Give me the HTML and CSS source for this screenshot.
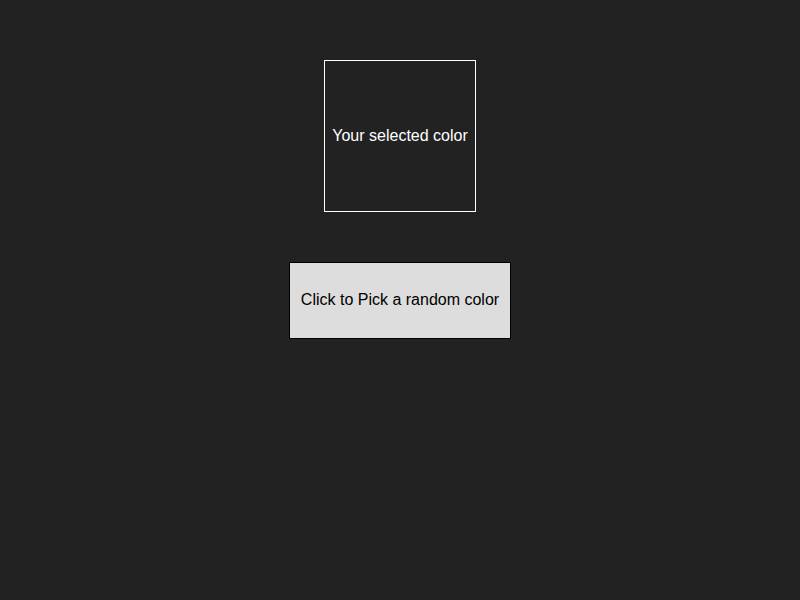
FILE: index.html
```html
<!DOCTYPE html>
<html>
<head>
<meta charset="utf-8">
<link rel="stylesheet" href="styles.css">
</head>
<body>
<main class="page">
  <div class="swatch">Your selected color</div>
  <button class="pick-btn">Click to Pick a random color</button>
</main>
</body>
</html>
```
FILE: styles.css
```css
html, body {
  margin: 0;
  padding: 0;
  background: #222222;
  height: 100%;
}
.page {
  display: flex;
  flex-direction: column;
  align-items: center;
  padding-top: 60px;
  gap: 50px;
  font-family: "Liberation Sans", Arial, sans-serif;
}
.swatch {
  width: 150px;
  height: 150px;
  border: 1px solid #ffffff;
  color: #ffffff;
  font-size: 16px;
  display: flex;
  align-items: center;
  justify-content: center;
  text-align: center;
}
.pick-btn {
  font-family: "Liberation Sans", Arial, sans-serif;
  font-size: 16px;
  color: #000000;
  background: #dddddd;
  border: 1px solid #000000;
  padding: 28px 11px 29px;
  margin: 0;
  cursor: pointer;
}
```
